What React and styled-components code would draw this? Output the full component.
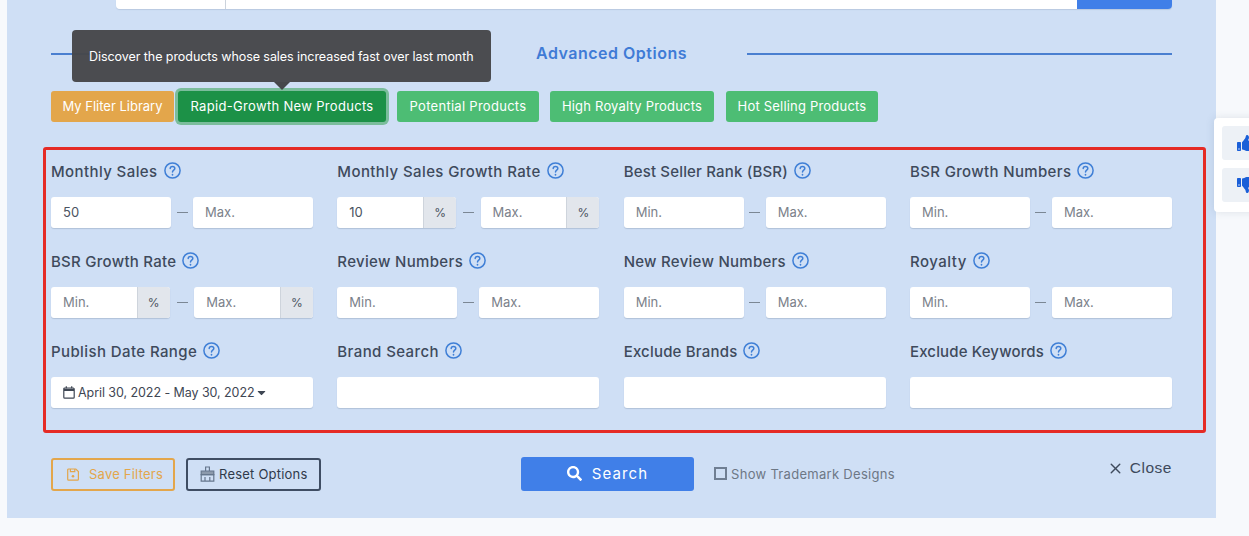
import React from "react";
import styled, { createGlobalStyle } from "styled-components";
import { FaCaretDown, FaSearch, FaThumbsUp, FaThumbsDown } from "react-icons/fa";
import { X } from "lucide-react";

const Global = createGlobalStyle`
  html, body { margin: 0; padding: 0; background: #f7f9fc; }
  body { font-family: Inter, "Liberation Sans", sans-serif; overflow: hidden; }
  *, *::before, *::after { box-sizing: border-box; }
`;
const Page = styled.div`
  position: relative; width: 1249px; height: 536px; padding-left: 7px; overflow: hidden;
`;
const Panel = styled.div`
  position: relative; width: 1209px; height: 518px; background: #cfdff5; padding: 0 44px;
`;
const TopBar = styled.div`
  display: flex; height: 9px; margin-left: 65px; border-radius: 0 0 4px 4px; overflow: hidden;
  box-shadow: 0 1px 1px rgba(60,80,110,.15);
`;
const TopSelect = styled.div`width: 110px; background: #fff; border-right: 1px solid #ccd3dc;`;
const TopInput = styled.div`flex: 1; background: #fff;`;
const TopButton = styled.div`width: 95px; background: #407fe8;`;
const TitleRow = styled.div`
  display: flex; align-items: center; gap: 60px; height: 28px; margin-top: 31px;
`;
const Rule = styled.div`flex: 1; height: 2px; background: #4a7fd0;`;
const Title = styled.div`
  font-size: 16px; font-weight: 600; color: #3f7bd6; letter-spacing: .5px; white-space: nowrap; margin-top: -2px;
`;
const Tooltip = styled.div`
  position: absolute; left: 65px; top: 30px; width: 419px; height: 52px; padding: 1px 0 0 17px;
  display: flex; align-items: center; border-radius: 4px; background: rgba(70,71,74,.97);
  color: #fff; font-size: 12.5px; letter-spacing: -.06px; white-space: nowrap;
  &::after {
    content: ""; position: absolute; left: 202px; top: 52px; border: 8px solid transparent;
    border-bottom: 0; border-top-color: #46474a;
  }
`;
const Presets = styled.div`display: flex; margin-top: 23px; height: 31px;`;
const Preset = styled.div`
  display: flex; align-items: center; justify-content: center; height: 31px; width: ${p => p.$w}px;
  margin-left: ${p => p.$ml}px; padding-bottom: 1px; border-radius: 3px; color: #fff; font-size: 13px; white-space: nowrap;
  letter-spacing: ${p => p.$ls}px; background: ${p => p.$bg};
  ${p => p.$active ? "box-shadow: 0 0 0 3px #7bbd9c;" : ""}
`;
const RedBox = styled.div`
  margin: 25px -34px 0 -8px; height: 286px; border: 3px solid #e52b25; border-radius: 3px; padding: 5px 5px 0;
  display: grid; grid-template-columns: repeat(4, 262px); column-gap: 24.33px; grid-auto-rows: 90px;
`;
const Field = styled.div`display: flex; flex-direction: column;`;
const LabelRow = styled.div`
  display: flex; align-items: center; gap: 6px; height: 32px; margin-bottom: 10px;
`;
const Label = styled.span`
  font-size: 15px; font-weight: 500; color: #3e4a5c; white-space: nowrap; letter-spacing: ${p => p.$ls}px;
`;
const HelpSvg = styled.svg`margin-top: -2px; flex: none;`;
const Help = () => (
  <HelpSvg width="17" height="17" viewBox="0 0 17 17" fill="none" stroke="#3f7fd6" strokeWidth="1.5" strokeLinecap="round">
    <circle cx="8.5" cy="8.5" r="7.6" />
    <path d="M6.2 6.6c0-1.4 1-2.2 2.3-2.2s2.3.8 2.3 2c0 1.8-2.3 1.8-2.3 3.6" />
    <path d="M8.5 12.6v.2" strokeWidth="1.7" />
  </HelpSvg>
);
const InputRow = styled.div`display: flex; align-items: center; height: 31px;`;
const InputBox = styled.div`
  flex: 1; min-width: 0; height: 31px; display: flex; background: #fff; border-radius: 3px; overflow: hidden;
  box-shadow: 0 1px 1px rgba(60,80,110,.2);
`;
const InputText = styled.div`
  flex: 1; display: flex; align-items: center; padding: 0 0 1px 12px; font-size: 13px;
  color: ${p => p.$value ? "#4a5361" : "#7b818a"};
`;
const Unit = styled.div`
  width: 33px; display: flex; align-items: center; justify-content: center; font-size: 12px; color: #4a5361;
  background: #e2e6ec; border-left: 1px solid #ced4dc;
`;
const Dash = styled.div`width: ${p => p.$wide ? 24.5 : 22}px; flex: none; height: 1px; display: flex; justify-content: center;
  &::before { content: ""; width: 11px; height: 1px; background: #7b8794; }
`;
const DateBox = styled(InputBox)`
  flex: 1; align-items: center; padding-left: 12px; font-size: 12.5px; letter-spacing: -.07px; color: #3e4653; white-space: nowrap;
`;
const DateText = styled.span`margin: 0 0 0 3px;`;
const Bottom = styled.div`display: flex; align-items: center; margin-top: 24px; height: 34px; position: relative;`;
const Outline = styled.div`
  display: flex; align-items: center; height: 33px; width: ${p => p.$w}px; margin-right: ${p => p.$mr}px;
  padding-left: ${p => p.$pl}px; gap: ${p => p.$gap}px; border: 2px solid ${p => p.$c}; border-radius: 3px; color: ${p => p.$tc};
  font-size: 13px; letter-spacing: .22px; white-space: nowrap;
`;
const SearchBtn = styled.div`
  width: 173px; height: 34px; margin-left: 200px; padding-bottom: 1px; display: flex; align-items: center; justify-content: center; gap: 10px;
  background: #407fe8; border-radius: 3px; color: #fff; font-size: 15px; letter-spacing: 1.1px;
`;
const Check = styled.div`
  display: flex; align-items: center; gap: 4px; margin-left: 20px; padding-bottom: 1px; font-size: 13px; color: #6d7785; white-space: nowrap; letter-spacing: .3px;
  &::before { content: ""; width: 13px; height: 13px; border: 2px solid #6f7e92; }
`;
const Close = styled.div`
  display: flex; align-items: center; gap: 6px; margin-left: auto; margin-top: -12px;
  font-family: "Liberation Sans", sans-serif; font-size: 15.5px; color: #3e4a5c; letter-spacing: .5px;
`;
const Side = styled.div`
  position: absolute; left: 1214px; top: 118px; width: 60px; height: 94px; padding: 8px; background: #fff;
  border-radius: 4px; box-shadow: 0 0 8px rgba(60,80,110,.15); display: flex; flex-direction: column; gap: 8px;
`;
const SideBtn = styled.div`
  height: 34px; background: #edf1f6; border-radius: 3px; padding-left: 15px; display: flex; align-items: center; color: #1a5fd8;
`;
const CalendarIcon = () => (
  <svg width="12" height="13" viewBox="0 0 12 13" fill="none" stroke="#3e4653" strokeWidth="1.2">
    <rect x="0.8" y="2" width="10.4" height="10.2" rx="1" />
    <path d="M1 3.8h10" strokeWidth="2.2" />
    <path d="M3.3 0.3v2M8.7 0.3v2" />
  </svg>
);
const SaveIcon = () => (
  <svg width="12" height="13" viewBox="0 0 12 13" fill="none" stroke="#e3a64b" strokeWidth="1.2">
    <path d="M1.6 1h7.2l2.6 2.6v7.6a.9.9 0 0 1-.9.9H1.6a.9.9 0 0 1-.9-.9V1.9a.9.9 0 0 1 .9-.9z" />
    <path d="M3.4 1v2.6h4.4V1" />
    <circle cx="6" cy="8.3" r="1.3" fill="#e3a64b" stroke="none" />
  </svg>
);
const BrushIcon = () => (
  <svg width="15" height="16" viewBox="0 0 15 16" fill="none" stroke="#66778d" strokeWidth="1.2">
    <path d="M5.6 5V1h3.8v4" />
    <path d="M1.2 5h12.6v3.6H1.2z" fill="#8c9aac" />
    <path d="M1.2 8.6h12.6v6.6H1.2zM5 11v4.2M9.8 11v4.2" />
  </svg>
);

const rows = [
  { l: "Monthly Sales", ls: .4, a: "50" },
  { l: "Monthly Sales Growth Rate", ls: .4, a: "10", pct: true },
  { l: "Best Seller Rank (BSR)", ls: .17 },
  { l: "BSR Growth Numbers", ls: .35 },
  { l: "BSR Growth Rate", ls: .27, pct: true },
  { l: "Review Numbers", ls: .33 },
  { l: "New Review Numbers", ls: .27 },
  { l: "Royalty", ls: .5 },
];
const more = [["Brand Search", .4], ["Exclude Brands", .19], ["Exclude Keywords", .15]];

const Box = ({ text, value, pct }) => (
  <InputBox>
    <InputText $value={value}>{text}</InputText>
    {pct && <Unit>%</Unit>}
  </InputBox>
);

export default function App() {
  return (
    <Page>
      <Global />
      <Panel>
        <TopBar><TopSelect /><TopInput /><TopButton /></TopBar>
        <TitleRow><Rule /><Title>Advanced Options</Title><Rule /></TitleRow>
        <Tooltip>Discover the products whose sales increased fast over last month</Tooltip>
        <Presets>
          <Preset $w={123} $ml={0} $ls={0} $bg="#e3a64b">My Fliter Library</Preset>
          <Preset $w={208} $ml={4} $ls={.32} $bg="#1c9147" $active>Rapid-Growth New Products</Preset>
          <Preset $w={142} $ml={11} $ls={.28} $bg="#4dbd74">Potential Products</Preset>
          <Preset $w={164} $ml={11} $ls={.2} $bg="#4dbd74">High Royalty Products</Preset>
          <Preset $w={152} $ml={12} $ls={.2} $bg="#4dbd74">Hot Selling Products</Preset>
        </Presets>
        <RedBox>
          {rows.map((r) => (
            <Field key={r.l}>
              <LabelRow><Label $ls={r.ls}>{r.l}</Label><Help /></LabelRow>
              <InputRow>
                <Box text={r.a || "Min."} value={!!r.a} pct={r.pct} />
                <Dash $wide={r.pct} />
                <Box text="Max." pct={r.pct} />
              </InputRow>
            </Field>
          ))}
          <Field>
            <LabelRow><Label $ls={.4}>Publish Date Range</Label><Help /></LabelRow>
            <InputRow>
              <DateBox><CalendarIcon /><DateText>April 30, 2022 - May 30, 2022</DateText><FaCaretDown size={13} /></DateBox>
            </InputRow>
          </Field>
          {more.map(([m, ls]) => (
            <Field key={m}>
              <LabelRow><Label $ls={ls}>{m}</Label><Help /></LabelRow>
              <InputRow><InputBox /></InputRow>
            </Field>
          ))}
        </RedBox>
        <Bottom>
          <Outline $w={124} $mr={11} $pl={14} $gap={10} $c="#e3a64b" $tc="#e3a64b"><SaveIcon />Save Filters</Outline>
          <Outline $w={135} $mr={0} $pl={12} $gap={4} $c="#3f4d63" $tc="#2f3a4a"><BrushIcon />Reset Options</Outline>
          <SearchBtn><FaSearch size={15} />Search</SearchBtn>
          <Check>Show Trademark Designs</Check>
          <Close><X size={17} />Close</Close>
        </Bottom>
      </Panel>
      <Side>
        <SideBtn><FaThumbsUp size={16} /></SideBtn>
        <SideBtn><FaThumbsDown size={16} /></SideBtn>
      </Side>
    </Page>
  );
}
